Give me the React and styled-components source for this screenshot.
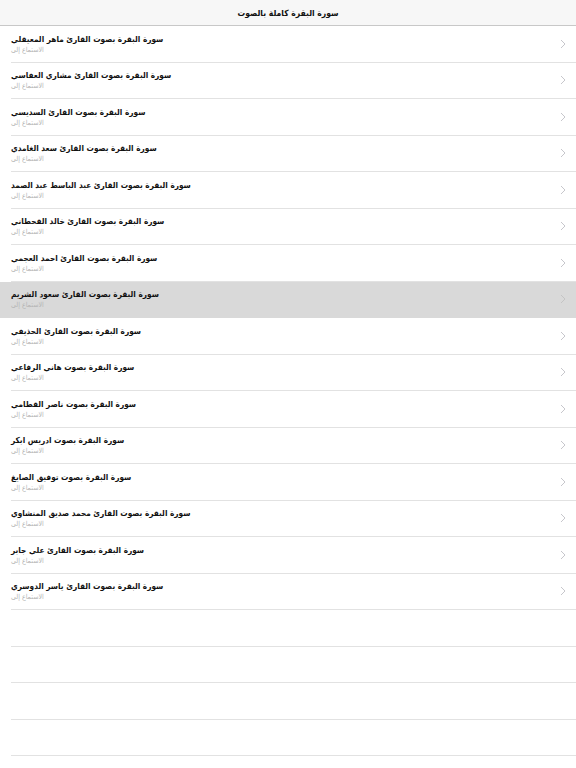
import React from "react";
import styled, { createGlobalStyle } from "styled-components";

const Global = createGlobalStyle`
  html, body { margin: 0; padding: 0; background: #ffffff; }
  body { font-family: "DejaVu Sans Condensed", "DejaVu Sans", "Noto Sans", sans-serif; font-stretch: condensed; }
`;

const Page = styled.div`
  width: 576px;
  height: 768px;
  overflow: hidden;
  background: #ffffff;
`;

const NavBar = styled.header`
  height: 25px;
  display: flex;
  align-items: center;
  justify-content: center;
  background: #f7f7f7;
  border-bottom: 0.5px solid #c8c8c8;
`;

const Title = styled.h1`
  margin: 0;
  font-size: 8.5px;
  font-weight: bold;
  color: #111;
  direction: rtl;
`;

const List = styled.ul`
  list-style: none;
  margin: 0;
  padding: 0;
`;

const Row = styled.li`
  height: 36.5px;
  box-sizing: border-box;
  display: flex;
  align-items: stretch;
  background: ${(p) => (p.$selected ? "#d9d9d9" : "transparent")};
  padding-left: ${(p) => (p.$selected ? "11px" : "0")};
  margin-left: ${(p) => (p.$selected ? "0" : "11px")};
`;

const RowInner = styled.div`
  flex: 1;
  display: flex;
  align-items: center;
  border-bottom: ${(p) => (p.$selected ? "0.5px solid transparent" : "0.5px solid #e2e2e2")};
  padding-right: 10px;
`;

const TextBlock = styled.div`
  flex: 1;
  display: flex;
  flex-direction: column;
  align-items: flex-start;
`;

const RowTitle = styled.span`
  direction: rtl;
  font-size: 8.2px;
  font-weight: bold;
  color: #111;
  line-height: 12px;
`;

const RowSub = styled.span`
  direction: rtl;
  font-size: 7px;
  color: #b5b5b5;
  line-height: 10px;
`;

const Chevron = styled.svg`
  width: 6px;
  height: 10px;
  flex: none;
`;

const items = [
  "سورة البقرة بصوت القارئ ماهر المعيقلي",
  "سورة البقرة بصوت القارئ مشاري العفاسي",
  "سورة البقرة بصوت القارئ السديسي",
  "سورة البقرة بصوت القارئ سعد الغامدي",
  "سورة البقرة بصوت القارئ عبد الباسط عبد الصمد",
  "سورة البقرة بصوت القارئ خالد القحطاني",
  "سورة البقرة بصوت القارئ احمد العجمي",
  "سورة البقرة بصوت القارئ سعود الشريم",
  "سورة البقرة بصوت القارئ الحذيفي",
  "سورة البقرة بصوت هاني الرفاعي",
  "سورة البقرة بصوت ناصر القطامي",
  "سورة البقرة بصوت ادريس ابكر",
  "سورة البقرة بصوت توفيق الصايغ",
  "سورة البقرة بصوت القارئ محمد صديق المنشاوي",
  "سورة البقرة بصوت القارئ علي جابر",
  "سورة البقرة بصوت القارئ ياسر الدوسري",
];

export default function App() {
  return (
    <Page>
      <Global />
      <NavBar>
        <Title>سورة البقرة كاملة بالصوت</Title>
      </NavBar>
      <List>
        {items.map((t, i) => {
          const sel = i === 7;
          return (
            <Row key={i} $selected={sel}>
              <RowInner $selected={sel}>
                <TextBlock>
                  <RowTitle>{t}</RowTitle>
                  <RowSub>الاستماع إلى</RowSub>
                </TextBlock>
                <Chevron viewBox="0 0 6 10">
                  <path d="M1 1 L5 5 L1 9" fill="none" stroke={sel ? "#c4c4c4" : "#c7c7cc"} strokeWidth="1" />
                </Chevron>
              </RowInner>
            </Row>
          );
        })}
        {[0, 1, 2, 3].map((i) => (
          <Row key={"e" + i}>
            <RowInner />
          </Row>
        ))}
      </List>
    </Page>
  );
}
